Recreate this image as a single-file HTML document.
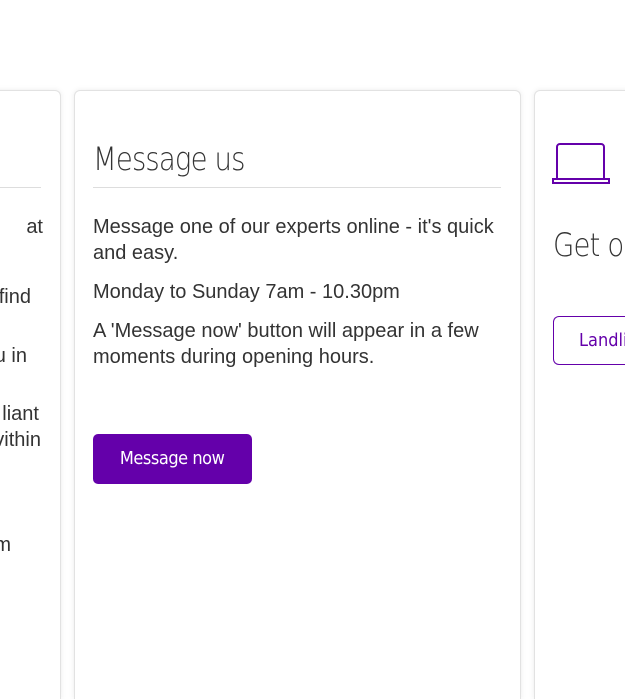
<!DOCTYPE html>
<html style="overflow:hidden;height:699px"><head><style>
body{margin:0;width:625px;height:699px;background:#fff;position:relative;overflow:hidden;font-family:"Liberation Sans",Arial,sans-serif;color:#333}
.card{position:absolute;top:90px;height:609px;box-sizing:border-box;background:#fff;border:1px solid #e2e2e2;border-bottom:none;border-radius:6px 6px 0 0;box-shadow:0 0 6px rgba(0,0,0,0.08)}
.p{position:absolute;font-size:20px;line-height:26px;color:#333;margin:0}
.r{position:absolute;font-size:20px;line-height:26px;color:#333;white-space:nowrap;text-align:right;width:100px}
h2{position:absolute;margin:0;font-weight:300;font-size:32px;color:#333;font-family:"DejaVu Sans","Liberation Sans",sans-serif;letter-spacing:-1px;transform:scaleX(0.86);transform-origin:left;white-space:nowrap}
.hr{position:absolute;height:1px;background:#ddd}
</style></head><body>
<div class="card" style="left:-20px;width:81px"></div>
<div class="hr" style="left:0;top:187px;width:41px"></div>
<div class="r" style="left:-57px;top:214px">at</div>
<div class="r" style="left:-69px;top:284px">find</div>
<div class="r" style="left:-73px;top:343px">u in</div>
<div class="r" style="left:-61px;top:401px">liant</div>
<div class="r" style="left:-59px;top:427px">vithin</div>
<div class="r" style="left:-89px;top:532px">m</div>

<div class="card" style="left:74px;width:447px"></div>
<h2 style="left:93px;top:140px">Message us</h2>
<div class="hr" style="left:93px;top:187px;width:408px"></div>
<p class="p" style="left:93px;top:214px;width:415px">Message one of our experts online - it's quick and easy.</p>
<p class="p" style="left:93px;top:279px">Monday to Sunday 7am - 10.30pm</p>
<p class="p" style="left:93px;top:318px;width:415px">A 'Message now' button will appear in a few moments during opening hours.</p>
<div style="position:absolute;left:93px;top:434px;width:159px;height:50px;background:#6400aa;border-radius:5px;color:#fff;font-size:18px;line-height:50px;text-align:center;font-family:'DejaVu Sans',sans-serif;letter-spacing:-0.5px"><span style="display:inline-block;transform:scaleX(0.9)">Message now</span></div>

<div class="card" style="left:534px;width:100px"></div>
<svg style="position:absolute;left:552px;top:142px" width="58" height="44" viewBox="0 0 58 44"><rect x="5" y="2" width="47" height="37" rx="3" fill="none" stroke="#6400aa" stroke-width="2"/><rect x="1" y="37" width="56" height="4" fill="#fff" stroke="#6400aa" stroke-width="2"/></svg>
<h2 style="left:553px;top:226px">Get o</h2>
<div style="position:absolute;left:553px;top:316px;width:72px;height:49px;border:1px solid #6400aa;border-right:none;border-radius:6px 0 0 6px;color:#6400aa;font-size:18px;line-height:48px;padding-left:25px;font-family:'DejaVu Sans',sans-serif;box-sizing:border-box;white-space:nowrap;overflow:hidden"><span style="display:inline-block;transform:scaleX(0.9);transform-origin:left">Landline</span></div>
</body></html>
